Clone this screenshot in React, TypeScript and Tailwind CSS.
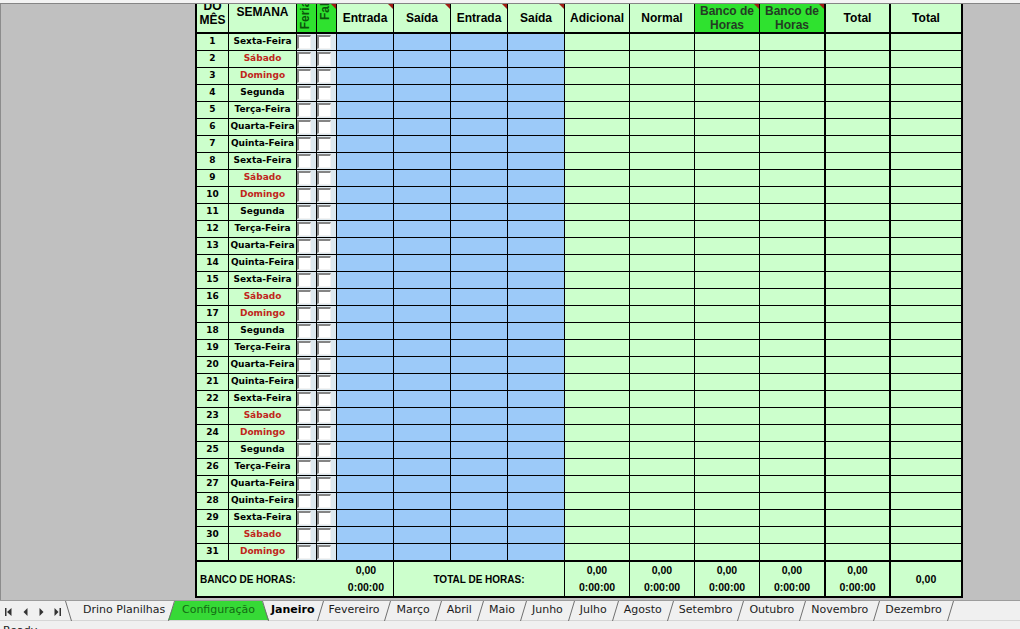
import React from "react";

//=============== SHEET DATA ===============//
const WEEK = [
  "Sexta-Feira",
  "Sábado",
  "Domingo",
  "Segunda",
  "Terça-Feira",
  "Quarta-Feira",
  "Quinta-Feira",
];

const DAYS = Array.from({ length: 31 }, (_, i) => ({
  day: i + 1,
  weekday: WEEK[i % 7],
}));

const MONTH_TABS = [
  "Fevereiro",
  "Março",
  "Abril",
  "Maio",
  "Junho",
  "Julho",
  "Agosto",
  "Setembro",
  "Outubro",
  "Novembro",
  "Dezembro",
];

// Column widths include the right border of each cell
const GRID =
  "grid grid-cols-[32px_68px_20px_20px_57px_57px_57px_57px_65px_65px_65px_66px_65px_72px]";

// The last three columns close with a thick line
const RIGHT = [
  "border-r",
  "border-r",
  "border-r",
  "border-r",
  "border-r",
  "border-r",
  "border-r",
  "border-r",
  "border-r",
  "border-r",
  "border-r",
  "border-r-2",
  "border-r-2",
  "border-r-2",
];

const FILL = [
  "bg-[#ccffcc]",
  "bg-[#ccffcc]",
  "bg-[#dde8ee]",
  "bg-[#dde8ee]",
  "bg-[#9ccaf9]",
  "bg-[#9ccaf9]",
  "bg-[#9ccaf9]",
  "bg-[#9ccaf9]",
  "bg-[#ccffcc]",
  "bg-[#ccffcc]",
  "bg-[#ccffcc]",
  "bg-[#ccffcc]",
  "bg-[#ccffcc]",
  "bg-[#ccffcc]",
];

//=============== SMALL PIECES ===============//
// Red comment marker in the top right corner of a cell
function CommentMark() {
  return (
    <span className="absolute top-0 right-0 h-0 w-0 border-t-[5px] border-l-[5px] border-t-[#a01d14] border-l-transparent" />
  );
}

// Classic sunken checkbox
function CheckBox() {
  return (
    <span className="mt-[1px] block h-[14px] w-[14px] border-t-2 border-l-2 border-r border-b border-t-[#858585] border-l-[#858585] border-r-[#f2f2f2] border-b-[#f2f2f2] bg-white" />
  );
}

function VerticalHead({ label, pad, marked }: { label: string; pad: string; marked?: boolean }) {
  return (
    <div
      className={`relative flex h-[30px] items-end justify-center overflow-hidden border-r border-b-2 border-black bg-[#2fe22f] pr-[3px] ${pad}`}
    >
      <span className="shrink-0 rotate-180 text-[12px] leading-[13px] font-bold text-[#0b540b] [writing-mode:vertical-rl]">
        {label}
      </span>
      {marked && <CommentMark />}
    </div>
  );
}

function HeadCell({
  children,
  right = "border-r",
  fill = "bg-[#ccffcc]",
  marked,
}: {
  children: React.ReactNode;
  right?: string;
  fill?: string;
  marked?: boolean;
}) {
  return (
    <div
      className={`relative flex h-[30px] items-center justify-center overflow-hidden border-b-2 border-black text-center text-[12px] leading-[14px] font-bold ${right} ${fill}`}
    >
      {children}
      {marked && <CommentMark />}
    </div>
  );
}

function Totals({ time = true }: { time?: boolean }) {
  return (
    <div className="flex flex-col items-center text-[10.5px] leading-[17px] font-bold">
      <span>0,00</span>
      {time && <span>0:00:00</span>}
    </div>
  );
}

//=============== TIMESHEET ===============//
function Sheet() {
  return (
    <div className={`${GRID} self-start border-b-2 border-l-2 border-black font-['Liberation_Sans',Arial,sans-serif] text-black`}>
      {/*========= HEADER =========*/}
      <div className="flex h-[30px] flex-col items-center justify-end overflow-hidden border-r border-b-2 border-black bg-[#ccffcc] pb-[5px] text-[12px] leading-[14px] font-bold">
        <span className="shrink-0">DIA</span>
        <span className="shrink-0">DO</span>
        <span className="shrink-0">MÊS</span>
      </div>
      <div className="flex h-[30px] justify-center overflow-hidden border-r border-b-2 border-black bg-[#ccffcc] pt-[1px] text-[12px] leading-[14px] font-bold">
        SEMANA
      </div>
      <VerticalHead label="Feriado" pad="pb-[3px]" />
      <VerticalHead label="Falta" pad="pb-[12px]" marked />
      <HeadCell marked>Entrada</HeadCell>
      <HeadCell marked>Saída</HeadCell>
      <HeadCell marked>Entrada</HeadCell>
      <HeadCell marked>Saída</HeadCell>
      <HeadCell>Adicional</HeadCell>
      <HeadCell>Normal</HeadCell>
      <HeadCell fill="bg-[#2fe22f] text-[#243c24]" marked>
        Banco de
        <br />
        Horas
      </HeadCell>
      <HeadCell fill="bg-[#2fe22f] text-[#243c24]" right="border-r-2" marked>
        Banco de
        <br />
        Horas
      </HeadCell>
      <HeadCell right="border-r-2">Total</HeadCell>
      <HeadCell right="border-r-2">Total</HeadCell>

      {/*========= DAY ROWS =========*/}
      {DAYS.map(({ day, weekday }) => {
        const weekend = weekday === "Sábado" || weekday === "Domingo";
        return RIGHT.map((right, col) => (
          <div
            key={`${day}-${col}`}
            className={`flex h-[17px] overflow-hidden border-b border-black font-['DejaVu_Sans',sans-serif] text-[9px] font-bold ${right} ${FILL[col]} ${
              col === 2 || col === 3 ? "items-start justify-start" : "items-center justify-center"
            }`}
          >
            {col === 0 && day}
            {col === 1 && (
              <span className={weekend ? "text-[#c0261b]" : "text-black"}>{weekday}</span>
            )}
            {(col === 2 || col === 3) && <CheckBox />}
          </div>
        ));
      })}

      {/*========= FOOTER =========*/}
      <div className="col-span-5 flex h-[35px] items-center justify-between border-t border-r border-black bg-[#ccffcc] pr-[9px] pl-[3px]">
        <span className="text-[10px] font-bold">BANCO DE HORAS:</span>
        <Totals />
      </div>
      <div className="col-span-3 flex h-[35px] items-center justify-center border-t border-r border-black bg-[#ccffcc] text-[10px] font-bold">
        TOTAL DE HORAS:
      </div>
      <div className="flex h-[35px] items-center justify-center border-t border-r border-black bg-[#ccffcc]">
        <Totals />
      </div>
      <div className="flex h-[35px] items-center justify-center border-t border-r border-black bg-[#ccffcc]">
        <Totals />
      </div>
      <div className="flex h-[35px] items-center justify-center border-t border-r border-black bg-[#ccffcc]">
        <Totals />
      </div>
      <div className="flex h-[35px] items-center justify-center border-t border-r-2 border-black bg-[#ccffcc]">
        <Totals />
      </div>
      <div className="flex h-[35px] items-center justify-center border-t border-r-2 border-black bg-[#ccffcc]">
        <Totals />
      </div>
      <div className="flex h-[35px] items-center justify-center border-t border-r-2 border-black bg-[#ccffcc]">
        <Totals time={false} />
      </div>
    </div>
  );
}

//=============== SHEET TABS ===============//
function NavArrows() {
  return (
    <svg width="65" height="20" viewBox="0 0 65 20" className="shrink-0" fill="#333">
      <rect x="5" y="7" width="1.5" height="8" />
      <polygon points="11.5,7 11.5,15 7,11" />
      <polygon points="27.5,7 27.5,15 23.5,11" />
      <polygon points="39.5,7 39.5,15 43.5,11" />
      <polygon points="54.5,7 54.5,15 58.5,11" />
      <rect x="59.5" y="7" width="1.5" height="8" />
    </svg>
  );
}

// Slanted tab edge: "back" draws "\", otherwise "/"
function TabEdge({ back }: { back?: boolean }) {
  return (
    <svg width="7" height="20" viewBox="0 0 7 20" className="relative z-10 shrink-0">
      {back ? (
        <line x1="0.5" y1="0" x2="6.5" y2="20" stroke="#707070" strokeWidth="1" />
      ) : (
        <line x1="0.5" y1="20" x2="6.5" y2="0" stroke="#707070" strokeWidth="1" />
      )}
    </svg>
  );
}

function SheetTabs() {
  return (
    <div className="flex h-[21px] shrink-0 items-stretch border-t border-b border-t-[#9c9c9c] border-b-[#d6d6d6] bg-[#f0f0f0] font-['DejaVu_Sans',sans-serif] text-[11px] text-[#1c1c1c]">
      <NavArrows />
      <TabEdge back />
      <span className="flex w-[96px] shrink-0 items-center pl-[11px]">Drino Planilhas</span>
      <TabEdge />
      <span className="-mx-[7px] flex w-[101px] shrink-0 items-center justify-center bg-[#36d936] text-[#136a13] [clip-path:polygon(7px_0,calc(100%-7px)_0,100%_100%,0_100%)]">
        Configuração
      </span>
      <TabEdge back />
      <span className="flex shrink-0 items-center px-[2px] font-bold text-black">Janeiro</span>
      <TabEdge />
      {MONTH_TABS.map((month) => (
        <React.Fragment key={month}>
          <span className="flex shrink-0 items-center px-[5px]">{month}</span>
          <TabEdge />
        </React.Fragment>
      ))}
    </div>
  );
}

//=============== APP ===============//
export default function App() {
  return (
    <div className="flex h-[629px] w-[1020px] flex-col overflow-hidden bg-[#f0f0f0]">
      {/* window edge above the sheet */}
      <div className="h-[4px] shrink-0 border-b border-[#858585] bg-[#f3f3f3]" />

      {/* sheet area */}
      <div className="flex h-[596px] shrink-0 overflow-hidden bg-[#c0c0c0]">
        <div className="w-[195px] shrink-0 border-l border-[#8c8c8c]" />
        <Sheet />
        <div className="flex-1" />
      </div>

      <SheetTabs />

      {/* status bar */}
      <div className="flex-1 pt-[3px] pl-[3px] font-['DejaVu_Sans',sans-serif] text-[11px] leading-[14px] text-[#1c1c1c]">
        Ready
      </div>
    </div>
  );
}
